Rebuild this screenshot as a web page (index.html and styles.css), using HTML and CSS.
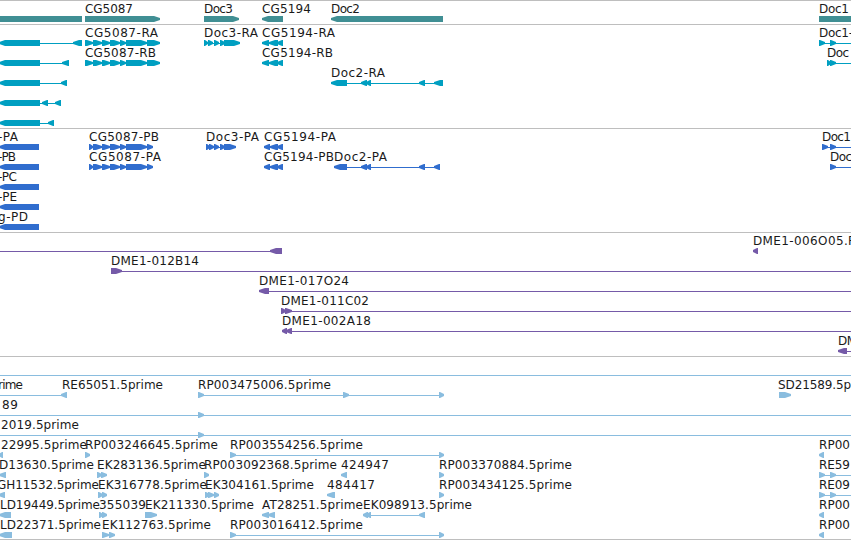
FILE: index.html
```html
<!DOCTYPE html>
<html>
<head>
  <meta charset="utf-8">
  <title>Genome Tracks</title>
  <link rel="stylesheet" href="styles.css">
</head>
<body>
  <div id="browser">
    <svg class="track genes" id="genes"></svg>
    <svg class="track transcripts" id="transcripts"></svg>
    <svg class="track proteins" id="proteins"></svg>
    <svg class="track clones" id="clones"></svg>
    <svg class="track ests" id="ests"></svg>
  </div>
  <script src="tracks.js"></script>
</body>
</html>
```
FILE: styles.css
```css
body {
  margin: 0;
  background: #fff;
  overflow: hidden;
}
#browser {
  display: flex;
  flex-direction: column;
  width: 851px;
  height: 540px;
  box-sizing: border-box;
  border-bottom: 1px solid #bebebe;
}
.track {
  display: block;
  flex: none;
  width: 100%;
  box-sizing: border-box;
  border-top: 1px solid #bebebe;
  overflow: hidden;
}
.track text {
  font-family: "DejaVu Sans", sans-serif;
  font-size: 12px;
  fill: #1a1a1a;
}
.track polygon,
.track rect {
  fill: currentColor;
}
.genes {
  height: 24px;
  color: #408f94;
}
.transcripts {
  height: 104px;
  color: #009fc1;
}
.proteins {
  height: 104px;
  color: #306dce;
}
.clones {
  height: 124px;
  color: #755aa8;
}
.ests {
  height: 183px;
  color: #8abddf;
}
```
FILE: tracks.js
```javascript
const NS = 'http://www.w3.org/2000/svg';
const ROW = 20;

// each row: labels [text, left, right], lines [x0, x1],
// fwd / rev: exons as [x0, x1]
const cg5087 = [[93, 102], [102, 110], [110, 120], [120, 126], [126, 147]];
const tracks = {
  genes: [
    { labels: [['CG5087', 85, 133], ['Doc3', 204, 233], ['CG5194', 262, 311], ['Doc2', 331, 360], ['Doc1', 819, 849]],
      fwd: [[-10, 82, 0], [85, 160], [204, 239], [819, 870]],
      rev: [[262, 283], [331, 443]] }
  ],
  transcripts: [
    { labels: [['CG5087-RA', 85, 158], ['Doc3-RA', 204, 258], ['CG5194-RA', 262, 335], ['Doc1-', 819, 853]],
      lines: [[40, 75], [85, 158], [204, 225], [262, 283], [819, 851]],
      fwd: [[85, 93], ...cg5087, [147, 160], [204, 208], [208, 213], [214, 219], [220, 225], [224, 240], [819, 825], [830, 836]],
      rev: [[-1, 40], [73, 82], [262, 269], [269, 278], [277, 283]] },
    { labels: [['CG5087-RB', 85, 156], ['CG5194-RB', 262, 333], ['Doc', 827, 849]],
      lines: [[40, 63], [85, 158], [262, 283], [827, 851]],
      fwd: [[85, 93], ...cg5087, [147, 160], [827, 831], [830, 836]],
      rev: [[-1, 40], [62, 69], [262, 269], [269, 278], [277, 283]] },
    { labels: [['Doc2-RA', 331, 385]],
      lines: [[40, 62], [347, 436]],
      rev: [[-1, 40], [61, 67], [331, 347], [361, 367], [366, 371], [419, 425], [434, 443]] },
    { lines: [[40, 60]], rev: [[-1, 40], [42, 48], [55, 61]] },
    { lines: [[40, 50]], rev: [[-1, 40], [48, 54]] }
  ],
  proteins: [
    { labels: [['-PA', -2, 18], ['CG5087-PB', 89, 159], ['Doc3-PA', 206, 259], ['CG5194-PA', 264, 336], ['Doc1', 822, 851]],
      lines: [[89, 150], [206, 225], [264, 283], [822, 851]],
      fwd: [[89, 93], ...cg5087, [147, 153], [206, 210], [209, 214], [214, 219], [220, 225], [224, 236], [822, 828], [830, 836]],
      rev: [[-1, 39], [264, 270], [270, 278], [277, 283]] },
    { labels: [['-PB', -2, 16], ['CG5087-PA', 89, 161], ['CG5194-PB', 264, 334], ['Doc2-PA', 334, 387], ['Doc', 830, 852]],
      lines: [[89, 150], [264, 283], [347, 438], [830, 851]],
      fwd: [[89, 93], ...cg5087, [147, 153], [830, 836]],
      rev: [[-1, 39], [264, 270], [270, 278], [277, 283], [334, 347], [361, 367], [366, 371], [419, 425], [434, 440]] },
    { labels: [['-PC', -2, 17]], rev: [[-1, 39]] },
    { labels: [['-PE', -2, 17]], rev: [[-1, 39]] },
    { labels: [['g-PD', -2, 28]], rev: [[-1, 39]] }
  ],
  clones: [
    { labels: [['DME1-006O05.F', 753, 855]],
      lines: [[0, 275]], rev: [[270, 282], [753, 758]] },
    { labels: [['DME1-012B14', 111, 199]],
      lines: [[111, 851]], fwd: [[111, 122]] },
    { labels: [['DME1-017O24', 259, 349]],
      lines: [[262, 851]], rev: [[259, 269]] },
    { labels: [['DME1-011C02', 281, 369]],
      lines: [[281, 851]], fwd: [[281, 286], [285, 292]] },
    { labels: [['DME1-002A18', 282, 371]],
      lines: [[284, 851]], rev: [[282, 287], [286, 292]] },
    { labels: [['DM', 838, 857]],
      lines: [[840, 851]], rev: [[838, 847]] }
  ],
  ests: [
    { lines: [[0, 851]] },
    { labels: [['rime', -2, 23], ['RE65051.5prime', 62, 163], ['RP003475006.5prime', 198, 331], ['SD21589.5prime', 778, 878]],
      lines: [[0, 63], [198, 441]],
      fwd: [[198, 204], [343, 349], [439, 444], [779, 791]], rev: [[61, 67]] },
    { labels: [['89', 2, 18]], lines: [[0, 851]], fwd: [[198, 204]] },
    { labels: [['2019.5prime', 1, 79]], lines: [[0, 851]], fwd: [[198, 204]] },
    { labels: [['22995.5prime', 1, 87], ['RP003246645.5prime', 85, 218], ['RP003554256.5prime', 230, 363], ['RP00', 819, 850]],
      lines: [[230, 441]],
      fwd: [[85, 90], [230, 236], [439, 444]], rev: [[-1, 3], [819, 824]] },
    { labels: [['D13630.5prime', -1, 94], ['EK283136.5prime', 97, 206], ['RP003092368.5prime', 204, 337], ['424947', 341, 389], ['RP003370884.5prime', 439, 572], ['RE59', 819, 850]],
      lines: [[819, 851]],
      fwd: [[97, 102], [101, 107], [204, 209], [439, 444], [819, 825], [830, 836]], rev: [[-1, 6], [341, 347]] },
    { labels: [['GH11532.5prime', -3, 99], ['EK316778.5prime', 98, 207], ['EK304161.5prime', 205, 314], ['484417', 327, 375], ['RP003434125.5prime', 439, 572], ['RE09', 819, 850]],
      lines: [[819, 851]],
      fwd: [[98, 103], [102, 107], [205, 210], [208, 214], [214, 219], [439, 444], [819, 825], [830, 836]], rev: [[-1, 5], [327, 335]] },
    { labels: [['LD19449.5prime', 0, 100], ['355039', 99, 146], ['EK211330.5prime', 145, 254], ['AT28251.5prime', 262, 363], ['EK098913.5prime', 363, 472], ['RP00', 819, 850]],
      lines: [[366, 422]],
      fwd: [[99, 103], [102, 107], [145, 157]],
      rev: [[-1, 11], [262, 269], [268, 275], [363, 368], [366, 371], [419, 425], [819, 824]] },
    { labels: [['LD22371.5prime', 0, 101], ['EK112763.5prime', 102, 211], ['RP003016412.5prime', 230, 363], ['RP00', 819, 850]],
      lines: [[230, 441]],
      fwd: [[102, 109], [109, 115], [230, 236], [439, 444]], rev: [[-1, 12], [819, 824]] }
  ]
};

function add(svg, tag, attrs) {
  const el = document.createElementNS(NS, tag);
  for (const key in attrs) el.setAttribute(key, attrs[key]);
  svg.appendChild(el);
  return el;
}

// arrow-ended bar, 6px tall; head is the length of the tapered end
function exon(svg, start, tip, y, head) {
  const dir = tip > start ? 1 : -1;
  const w = Math.abs(tip - start);
  const h = head === undefined ? Math.min(w - 1, 6) : head;
  const neck = tip - dir * h;
  const cut = h ? 2 : 0;
  add(svg, 'polygon', {
    points: `${start},${y} ${neck},${y} ${tip},${y + cut} ${tip},${y + 6 - cut} ${neck},${y + 6} ${start},${y + 6}`
  });
}

for (const id in tracks) {
  const svg = document.getElementById(id);
  tracks[id].forEach((row, i) => {
    const y = i * ROW + 15;
    (row.lines || []).forEach(([a, b]) => add(svg, 'rect', { x: a, y: y + 3, width: b - a, height: 1 }));
    (row.fwd || []).forEach(([a, b, head]) => exon(svg, a, b, y, head));
    (row.rev || []).forEach(([a, b, head]) => exon(svg, b, a, y, head));
    (row.labels || []).forEach(([text, left, right]) => {
      const label = add(svg, 'text', { x: left, y: y - 3, textLength: right - left });
      label.textContent = text;
    });
  });
}
```
